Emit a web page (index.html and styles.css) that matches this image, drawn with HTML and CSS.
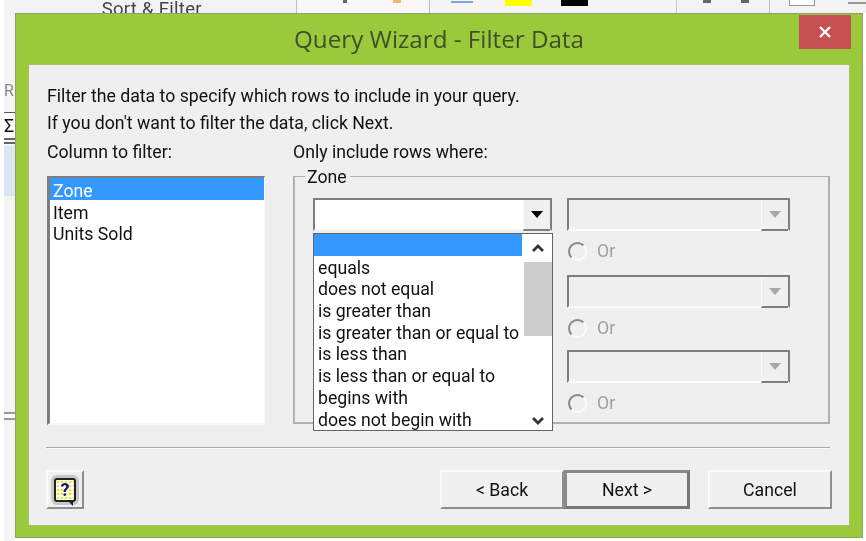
FILE: index.html
```html
<!DOCTYPE html>
<html lang="en">
<head>
<meta charset="utf-8">
<title>Query Wizard - Filter Data</title>
<link rel="stylesheet" href="styles.css">
</head>
<body>
<div class="page">
  <div class="ribbon">
    <div class="rib rib-a"><span class="sort">Sort &amp; Filter</span></div>
    <div class="rib rib-b"><i class="dot d1"></i><i class="dot d2"></i></div>
    <div class="rib rib-c"><i class="links"></i><i class="swatch yellow"></i><i class="swatch black"></i></div>
    <div class="rib rib-d"><i class="tick"></i><i class="tick"></i></div>
    <div class="rib rib-e"><i class="mini"></i><i class="dash"></i></div>
  </div>
  <div class="strip">
    <span class="strip-r">R</span>
    <span class="strip-s">Σ</span>
    <div class="strip-lines"></div>
    <div class="strip-blue"></div>
    <div class="strip-low"></div>
  </div>

  <div class="dialog">
    <div class="titlebar">Query Wizard - Filter Data</div>
    <button class="close" aria-label="Close">
      <svg width="14" height="14" viewBox="0 0 14 14"><path d="M2 2 L12 12 M12 2 L2 12" stroke="#fff" stroke-width="2.4" fill="none"/></svg>
    </button>
    <div class="body">
      <p class="line wide">Filter the data to specify which rows to include in your query.</p>
      <p class="line wide">If you don't want to filter the data, click Next.</p>
      <div class="columns">
        <div class="col">
          <div class="line label">Column to filter:</div>
          <ul class="listbox">
            <li class="sel">Zone</li>
            <li>Item</li>
            <li>Units Sold</li>
          </ul>
        </div>
        <div class="col">
          <div class="line label spaced">Only include rows where:</div>
          <div class="group">
            <span class="legend">Zone</span>
            <div class="group-grid">
              <div class="combo">
                <span class="combo-btn"><i class="tri"></i></span>
              </div>
              <div class="rules">
                <div class="rule">
                  <div class="combo off"><span class="combo-btn"><i class="tri"></i></span></div>
                  <div class="radio-row"><i class="radio"></i><span>Or</span></div>
                </div>
                <div class="rule short">
                  <div class="combo off"><span class="combo-btn"><i class="tri"></i></span></div>
                  <div class="radio-row"><i class="radio"></i><span>Or</span></div>
                </div>
                <div class="rule">
                  <div class="combo off"><span class="combo-btn"><i class="tri"></i></span></div>
                  <div class="radio-row"><i class="radio"></i><span>Or</span></div>
                </div>
              </div>
            </div>
            <div class="popup">
              <ul class="popup-list">
                <li class="sel">&nbsp;</li>
                <li>equals</li>
                <li>does not equal</li>
                <li>is greater than</li>
                <li>is greater than or equal to</li>
                <li>is less than</li>
                <li>is less than or equal to</li>
                <li>begins with</li>
                <li>does not begin with</li>
              </ul>
              <div class="scroll">
                <svg class="chev" width="16" height="12" viewBox="0 0 16 12"><path d="M3 9 L8 4 L13 9" stroke="#333" stroke-width="2.8" fill="none"/></svg>
                <div class="thumb"></div>
                <svg class="chev" width="16" height="12" viewBox="0 0 16 12"><path d="M3 3 L8 8 L13 3" stroke="#333" stroke-width="2.8" fill="none"/></svg>
              </div>
            </div>
          </div>
        </div>
      </div>
      <div class="sep"></div>
      <div class="footer">
        <button class="help" aria-label="Help">
          <span class="help-bg">
            <span class="help-q">?</span>
            <i class="help-tail"></i>
          </span>
        </button>
        <div class="actions">
          <div class="pair">
            <button class="btn">&lt; Back</button>
            <button class="btn default">Next &gt;</button>
          </div>
          <button class="btn">Cancel</button>
        </div>
      </div>
    </div>
  </div>
</div>
</body>
</html>
```

FILE: styles.css
```css
* { box-sizing: border-box; }
html, body { margin: 0; padding: 0; background: #fff; }
.page {
  position: relative;
  width: 866px;
  height: 541px;
  overflow: hidden;
  background: #fff;
  font-family: Roboto, "Liberation Sans", sans-serif;
  font-size: 17.7px;
  color: #111;
  filter: blur(0.35px);
}
ul { list-style: none; margin: 0; padding: 0; }
p { margin: 0; }
button { font: inherit; color: inherit; padding: 0; margin: 0; }

/* backdrop */
.ribbon {
  display: flex;
  height: 13px;
  margin-left: 4px;
  background: #f3f3f3;
}
.rib { position: relative; height: 13px; border-right: 1px solid #bdbdbd; }
.rib-a { width: 293px; text-align: center; }
.rib-b { width: 134px; background: #f8f8f8; display: flex; padding-left: 46px; }
.rib-c { width: 247px; background: #f5f5f5; padding-left: 21px; display: flex; border-right: 1px solid #c8c8c8; }
.rib-d { width: 93px; display: flex; gap: 30px; padding-left: 26px; }
.rib-e { flex: 1; border-right: 0; padding-left: 19px; display: flex; }
.sort { position: relative; top: -2px; left: 2px; font-size: 18.5px; line-height: 22px; color: #444; letter-spacing: .3px; }
.dot { height: 3px; }
.d1 { background: #666; width: 4px; }
.d2 { background: #efb76a; width: 8px; margin-left: 46px; }
.links { width: 22px; height: 3px; border-bottom: 2px solid #7fa8d8; margin-right: 32px; }
.swatch { width: 27px; height: 6px; }
.yellow { background: #ff0; margin-right: 29px; }
.black { background: #000; }
.tick { width: 8px; height: 3px; background: #666; }
.mini { display: block; width: 26px; height: 6px; border: 1px solid #999; border-top: 0; background: #fff; }
.dash { width: 18px; height: 2px; margin: 2px 0 0 33px; background: #999; }
.strip { width: 11px; margin-left: 4px; height: 528px; background: #f4f4f4; display: flex; flex-direction: column; }
.strip-r { margin-top: 66px; height: 24px; font-size: 16px; line-height: 24px; color: #8a8a8a; }
.strip-s { margin-top: 9px; height: 26px; font-size: 18px; line-height: 26px; color: #111; border-top: 1px solid #555; background: #fff; }
.strip-lines { height: 6px; border-top: 2px solid #666; border-bottom: 2px solid #666; }
.strip-blue { margin-top: 2px; height: 50px; background: #dce6f2; }
.strip-low { margin-top: 216px; height: 8px; border-top: 2px solid #999; border-bottom: 2px solid #999; background: #fff; }

/* dialog */
.dialog {
  position: absolute;
  left: 15px;
  top: 13px;
  width: 848px;
  height: 525px;
  background: #9aca3c;
  border: 1px solid #8d9f6a;
  padding: 50px 12px 11px 12px;
}
.titlebar {
  position: absolute;
  top: -1px;
  left: 0;
  right: 0;
  height: 50px;
  display: flex;
  align-items: center;
  justify-content: center;
  font-family: "Open Sans", sans-serif;
  font-size: 24.2px;
  color: #3f4f26;
}
.close {
  position: absolute;
  top: 1px;
  right: 11px;
  width: 52px;
  height: 34px;
  background: #c75050;
  border: 0;
  display: flex;
  align-items: center;
  justify-content: center;
}
.body {
  height: 100%;
  background: #efefef;
  padding: 17px 20px 0 18px;
  border: 1px solid #a5c06a;
  display: flex;
  flex-direction: column;
}
.line { height: 27px; line-height: 28px; white-space: nowrap; }
.columns {
  display: grid;
  grid-template-columns: 218px 537px;
  column-gap: 28px;
  margin-top: 2px;
}
.label { margin-bottom: 11px; }

.listbox {
  height: 249px;
  background: #fff;
  border-style: solid;
  border-width: 2px 1px 2px 3px;
  border-color: #7e7e7e #f8f8f8 #f8f8f8 #7e7e7e;
}
.listbox li { padding-left: 3px; height: 21.7px; line-height: 26px; }
.sel { background: #3399ff; color: #fff; }

.group {
  position: relative;
  height: 248px;
  border: 2px solid #b0b0b0;
  border-top-width: 1px;
  padding: 21px 0 0 18px;
}
.legend {
  position: absolute;
  left: 10px;
  top: -10px;
  line-height: 20px;
  padding: 0 3px 0 2px;
  background: #efefef;
}
.group-grid {
  display: grid;
  grid-template-columns: 239px 223px;
  column-gap: 15px;
  align-items: start;
}
.combo {
  position: relative;
  display: flex;
  justify-content: flex-end;
  height: 33px;
  background: #fff;
  border-style: solid;
  border-width: 2px;
  border-color: #7e7e7e #7e7e7e #f4f4f4 #7e7e7e;
}
.combo.off { background: #efefef; border-bottom-color: #fafafa; }
.combo-btn {
  width: 27px;
  display: flex;
  align-items: center;
  justify-content: center;
  background: #f0f0f0;
  border-left: 1px solid #fafafa;
  border-bottom: 2px solid #7e7e7e;
  margin-bottom: -2px;
}
.tri { width: 0; height: 0; border: 6px solid transparent; border-top: 7px solid #000; border-bottom: 0; }
.off .tri { border-top-color: #a8a8a8; }
.rule { height: 77px; }
.rule.short { height: 75px; }
.radio-row {
  display: flex;
  align-items: center;
  gap: 10px;
  height: 38px;
  margin-top: 1px;
  padding-left: 1px;
  color: #a0a0a0;
}
.radio {
  display: block;
  width: 19px;
  height: 19px;
  border-radius: 50%;
  border: 2px solid;
  border-color: #8a8a8a #fbfbfb #fbfbfb #8a8a8a;
}

.popup {
  position: absolute;
  left: 18px;
  top: 56px;
  width: 240px;
  height: 198px;
  background: #fff;
  border: 1px solid #646464;
  display: flex;
  overflow: hidden;
}
.popup-list { flex: 1; line-height: 21.7px; }
.popup-list li { height: 21.7px; padding-left: 4px; white-space: nowrap; }
.popup-list li.sel { margin-bottom: 2px; }
.scroll {
  width: 28px;
  display: flex;
  flex-direction: column;
  align-items: center;
  background: #fff;
  margin-left: 2px;
}
.chev { flex: none; margin-top: 8px; }
.thumb { flex: none; width: 100%; height: 74px; margin-top: 8px; margin-bottom: 71px; background: #cdcdcd; }

.sep { margin: 22px -1px 0; height: 2px; background: #a9a9a9; border-bottom: 1px solid #fafafa; }
.footer {
  display: flex;
  justify-content: space-between;
  align-items: flex-start;
  margin: 21px -3px 0 -1px;
}
.help {
  width: 38px;
  height: 39px;
  background: #f0f0f0;
  border-style: solid;
  border-width: 2px;
  border-color: #fafafa #8e8e8e #8e8e8e #fafafa;
  display: flex;
  align-items: center;
  justify-content: center;
}
.help-bg {
  position: relative;
  display: block;
  width: 22px;
  height: 24px;
  background: #fff;
  background-image: radial-gradient(#ee0 1px, transparent 1.2px);
  background-size: 4px 4px;
  border: 2px solid #222;
  border-radius: 3px;
  box-shadow: 0 0 0 3px #c8c8c8;
  color: #10108c;
  font-weight: 700;
  font-size: 18px;
  line-height: 20px;
  text-align: center;
}
.help-q { display: block; }
.help-tail { position: absolute; right: 1px; bottom: -6px; width: 0; height: 0; border-top: 6px solid #222; border-left: 6px solid transparent; }
.actions { display: flex; gap: 18px; }
.pair { display: flex; }
.btn {
  width: 124px;
  height: 39px;
  background: #f0f0f0;
  border-style: solid;
  border-width: 2px;
  border-color: #fafafa #8e8e8e #8e8e8e #fafafa;
  color: #111;
}
.btn.default {
  width: 126px;
  border-width: 3px;
  border-color: #8a8a8a #777 #777 #8a8a8a;
}
```
